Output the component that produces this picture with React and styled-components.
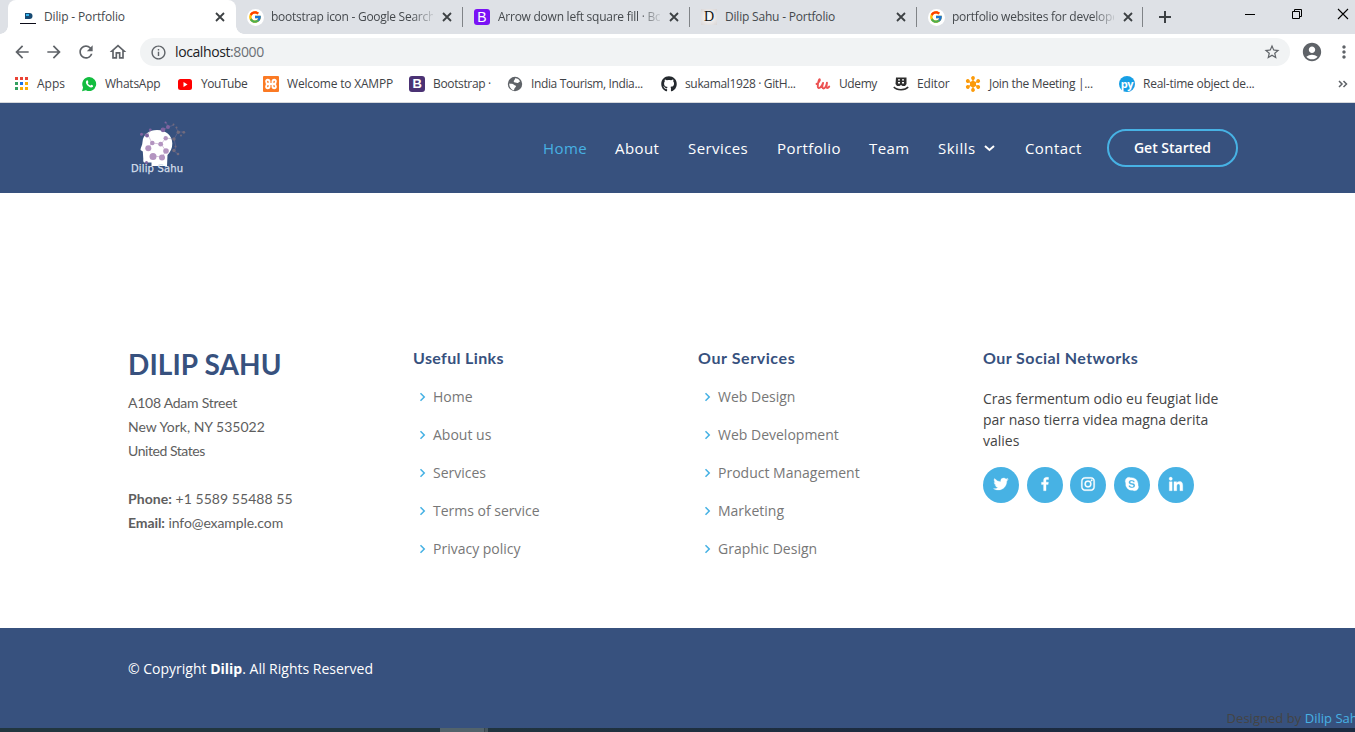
import React from 'react';
import styled, { createGlobalStyle } from 'styled-components';
import { FcGoogle } from 'react-icons/fc';
import { MdArrowBack, MdArrowForward, MdRefresh, MdOutlineHome, MdInfoOutline, MdStarBorder, MdAccountCircle, MdMoreVert } from 'react-icons/md';
import { BiLogoTwitter, BiLogoFacebook, BiLogoInstagram, BiLogoSkype, BiLogoLinkedin, BiChevronRight } from 'react-icons/bi';
import { FaGithub } from 'react-icons/fa';

const Global = createGlobalStyle`
  * { box-sizing: border-box; }
  html, body { margin: 0; overflow: hidden; background: #fff; }
  body { font-family: "Open Sans", "Noto Sans", sans-serif; color: #444; }
  svg { display: block; flex: none; }
`;

const Screen = styled.div`
  width: 1355px;
  height: 732px;
  overflow: hidden;
  display: flex;
  flex-direction: column;
`;

/* Browser chrome */
const TabStrip = styled.div`
  height: 34px;
  flex: none;
  display: flex;
  align-items: stretch;
  padding-left: 8px;
  background: #dee1e6;
`;
const Tab = styled.div`
  width: ${p => (p.$active ? 228 : p.$w || 227)}px;
  flex: none;
  display: flex;
  align-items: center;
  padding: 0 10px 0 ${p => (p.$active ? 12 : 11)}px;
  background: ${p => (p.$active ? '#fff' : 'transparent')};
  border-radius: 8px 8px 0 0;
  position: relative;
  ${p => p.$active && `
    &::before, &::after {
      content: ''; position: absolute; bottom: 0; width: 8px; height: 8px;
    }
    &::before { left: -8px; background: radial-gradient(circle at 0 0, transparent 7.5px, #fff 8px); }
    &::after { right: -8px; background: radial-gradient(circle at 100% 0, transparent 7.5px, #fff 8px); }
  `}
`;
const Favicon = styled.div`
  width: 16px;
  height: 16px;
  flex: none;
  display: flex;
  align-items: center;
  justify-content: center;
`;
const TabTitle = styled.div`
  width: ${p => (p.$active ? 166 : 162)}px;
  margin-left: 8px;
  flex: none;
  overflow: hidden;
  white-space: nowrap;
  font-size: 12px;
  line-height: 18px;
  letter-spacing: ${p => p.$ls || 0}px;
  color: #45494d;
  ${p => p.$fade && 'mask-image: linear-gradient(90deg, #000 140px, transparent 166px);'}
`;
const TabClose = styled.svg`
  width: 14px;
  height: 14px;
  margin-left: ${p => (p.$active ? 3 : 7)}px;
  stroke: #3c4043;
  stroke-width: 1.8;
`;
const TabRule = styled.div`
  width: 1px;
  height: 20px;
  position: absolute;
  right: 0;
  top: 7px;
  background: #808387;
`;
const NewTab = styled.div`
  width: 43px;
  display: flex;
  align-items: center;
  justify-content: center;
`;
const WindowButtons = styled.div`
  margin-left: auto;
  height: 28px;
  display: flex;
  align-items: center;
  gap: 34px;
  padding-right: 6px;
`;

const Toolbar = styled.div`
  height: 36px;
  flex: none;
  display: flex;
  align-items: center;
  color: #5f6368;
  padding: 0 0 0 12px;
`;
const ToolIcons = styled.div`
  width: 128px;
  display: flex;
  gap: 12px;
`;
const Omnibox = styled.div`
  width: 1150px;
  height: 28px;
  display: flex;
  align-items: center;
  padding: 0 10px;
  border-radius: 14px;
  background: #f1f3f4;
`;
const Address = styled.div`
  flex: 1;
  margin-left: 8px;
  font-size: 14px;
  line-height: 20px;
  letter-spacing: -0.4px;
  color: #202124;
  span { color: #6b6f74; }
`;
const ProfileIcon = styled.div`
  margin-left: 11px;
  margin-right: 11px;
`;

const Bookmarks = styled.div`
  height: 33px;
  flex: none;
  display: flex;
  padding: 0 4px 5px 13px;
  border-bottom: 1px solid #d5d8dc;
`;
const Bookmark = styled.div`
  width: ${p => p.$w}px;
  flex: none;
  display: flex;
  align-items: center;
  gap: 8px;
  white-space: nowrap;
  font-size: 12px;
  letter-spacing: ${p => p.$ls}px;
  color: #3f4347;
`;
const Overflow = styled.div`
  margin-left: auto;
  display: flex;
  align-items: center;
`;
const Badge = styled.div`
  width: 16px;
  height: 16px;
  display: flex;
  align-items: center;
  justify-content: center;
  border-radius: ${p => p.$r ?? 3}px;
  background: ${p => p.$bg};
  color: ${p => p.$fg || '#fff'};
  font: ${p => p.$font || 'bold 13px/16px "Liberation Sans", sans-serif'};
`;
const White = styled.div`
  width: 17px;
  height: 17px;
  flex: none;
  display: flex;
  align-items: center;
  justify-content: center;
  border-radius: 50%;
  background: #fff;
`;

/* Site header */
const Header = styled.header`
  height: 90px;
  flex: none;
  display: flex;
  padding: 0 117px 0 128px;
  background: #37517e;
`;
const Nav = styled.nav`
  margin-left: auto;
  display: flex;
  align-items: center;
`;
const NavLink = styled.a`
  width: ${p => p.$w}px;
  flex: none;
  display: flex;
  align-items: center;
  gap: 8px;
  white-space: nowrap;
  font-size: 15px;
  font-weight: 500;
  line-height: 20px;
  letter-spacing: ${p => p.$ls || 0.42}px;
  color: ${p => (p.$active ? '#47b2e4' : '#fff')};
`;
const StartButton = styled.a`
  width: 131px;
  height: 38px;
  margin-bottom: 1px;
  display: flex;
  align-items: center;
  justify-content: center;
  border: 2px solid #47b2e4;
  border-radius: 50px;
  font-size: 14px;
  font-weight: 600;
  color: #fff;
`;

/* Footer */
const FooterTop = styled.section`
  height: 435px;
  flex: none;
  display: grid;
  grid-template-columns: repeat(4, 285px);
  padding: 154px 0 0 128px;
`;
const Brand = styled.h3`
  margin: 0 0 10px;
  font: 700 28px/34px Lato, sans-serif;
  letter-spacing: 0.1px;
  color: #37517e;
`;
const Contact = styled.p`
  margin: 0;
  font: 400 14px/24px Lato, sans-serif;
  color: #5e5e5e;
  white-space: nowrap;
`;
const Line = styled.span`
  display: block;
  min-height: 24px;
  letter-spacing: ${p => p.$ls || 0}px;
`;
const ColumnTitle = styled.h4`
  margin: 0;
  padding-top: 1px;
  font: 700 16px/20px Lato, sans-serif;
  letter-spacing: ${p => p.$ls || 0}px;
  color: #37517e;
`;
const Links = styled.ul`
  margin: 18px 0 0;
  padding: 0;
  list-style: none;
  li {
    height: 38px;
    display: flex;
    align-items: flex-start;
    font-size: 14px;
    line-height: 21px;
    color: #777;
  }
  svg { width: 18px; height: 18px; margin: 2px 2px 0 0; color: #47b2e4; }
`;
const Blurb = styled.p`
  width: 250px;
  margin: 20px 0 16px;
  font-size: 14px;
  line-height: 21px;
  color: #444;
`;
const Socials = styled.div`
  display: flex;
  gap: 7.7px;
`;
const Social = styled.a`
  width: 36px;
  height: 36px;
  display: flex;
  align-items: center;
  justify-content: center;
  padding-bottom: 2px;
  border-radius: 50%;
  background: #47b2e4;
  color: #fff;
  svg { width: 18px; height: 18px; stroke: #fff; stroke-width: 0.4; }
`;
const FooterBottom = styled.footer`
  height: 100px;
  flex: none;
  display: flex;
  flex-direction: column;
  justify-content: space-between;
  overflow: hidden;
  padding: 30px 0 0 128px;
  background: #37517e;
`;
const Copyright = styled.div`
  font-size: 14px;
  line-height: 21px;
  color: #fff;
`;
const Credits = styled.div`
  margin-left: 1098.600px;
  font-size: 13px;
  line-height: 20px;
  letter-spacing: 0.03px;
  white-space: nowrap;
  color: #444;
  a { color: #47b2e4; }
`;
const Taskbar = styled.div`
  height: 4px;
  flex: none;
  background: linear-gradient(90deg, #21363f 0, #21363f 440px, #52636b 440px, #52636b 484px, #26343c 484px, #46565e 485px, #46565e 488px, #20343f 488px, #1c2b40 900px, #1b2a40 100%);
`;
const Logo = styled.svg`
  margin-top: 15px;
`;

const SiteLogo = () => (
  <Logo width="64" height="60" viewBox="128 118 64 60">
    <path fill="#fff" d="M142.500 142c.5-7.500 6.500-12 14.500-12 9 0 15.300 5.500 15.300 13.500 0 5-1.800 8-4.800 11.500l-.5 11h-15.500v-3.500h-7c-1.200 0-1.400-1.500-1.200-3.500l-.5-7.500-2.300-1.500c0-2.500 2-5 2-8z" />
    <g stroke="#b79bc4" strokeWidth=".7" fill="none" opacity=".8">
      <path d="M152 143l9 1 5-6 M161 144l5 7-4 6-9-1M148 148l4-5-4-8" />
    </g>
    <path stroke="#84739a" strokeWidth=".6" fill="none" opacity=".7" d="M142 134l6 0 3-4M163 130l5-3 6-2M166 138l8 1 4-7h6M174 139l2 8-2 4 4 3M178 132l-2-5M166 122l2 5" />
    <g fill="#b394c0">
      <circle cx="148.300" cy="148.300" r="3" /><circle cx="153" cy="156.500" r="3.500" /><circle cx="162" cy="157.500" r="3" />
      <circle cx="152.300" cy="143" r="2.300" /><circle cx="160.700" cy="144.200" r="2.400" /><circle cx="166" cy="151" r="2.800" /><circle cx="165.700" cy="138.200" r="2.200" />
    </g>
    <g fill="#7f63a0">
      <circle cx="147" cy="135.500" r="2" /><circle cx="141.500" cy="134.300" r="1.500" /><circle cx="150.300" cy="129.800" r="1.400" /><circle cx="146.500" cy="162.500" r="1.500" />
      <circle cx="163" cy="129.800" r="2.400" /><circle cx="168" cy="127" r="2" /><circle cx="165.500" cy="122.500" r="1" />
    </g>
    <g fill="#716b7d">
      <circle cx="174" cy="139" r="1.700" /><circle cx="178.300" cy="132.300" r="1.700" /><circle cx="183.800" cy="132.300" r="1.400" /><circle cx="173.500" cy="124.500" r="1" /><circle cx="176.500" cy="127.500" r="1" />
      <circle cx="174" cy="150.500" r="1.700" /><circle cx="178" cy="154" r="1.300" /><circle cx="175.500" cy="146.500" r="1" /><circle cx="181" cy="135.500" r="1" />
    </g>
    <text x="131" y="171.500" textLength="52" fill="#d5dfec" fontFamily="DejaVu Sans, sans-serif" fontSize="10" stroke="#d5dfec" strokeWidth=".25">Dilip Sahu</text>
  </Logo>
);
const DilipFav = () => (
  <svg width="16" height="16"><path fill="#174a73" d="M5 4h4.500a3 3 0 0 1 0 6H5z" /><path fill="#35b5ee" d="M6 5h3v2H6z" /><path fill="#0b0b18" d="M0 14h16v1H0z" /></svg>
);
const Apps = () => {
  const c = ['#ea4335', '#ea4335', '#ea4335', '#34a060', '#1a73e8', '#fbad05', '#34a060', '#fbad05', '#fbad05'];
  return <svg width="16" height="16">{c.map((f, i) => <rect key={i} x={2 + (i % 3) * 5} y={1 + Math.floor(i / 3) * 5} width="3" height="3" fill={f} />)}</svg>;
};
const Whats = () => (
  <svg width="16" height="16" viewBox="0 0 16 16"><path fill="#12bd3f" d="M8.200 1a7 7 0 1 1-3.300 13.200L1 15.200l1.100-3.800A7 7 0 0 1 8.200 1z" /><path fill="#fff" d="M5.700 4.500c.5-.4.900-.2 1.100.2l.6 1.300c.1.400-.6.900-.6 1.200.5 1.100 1.400 1.900 2.500 2.400.4 0 .8-.9 1.200-.8l1.400.8c.4.300.1 1.100-.3 1.500-1.700 1.400-5.200-.8-6.200-3-.8-1.500-.6-2.900.3-3.600z" /></svg>
);
const YouTube = () => (
  <svg width="16" height="16"><rect x="1" y="3" width="14" height="11" rx="2.500" fill="red" /><path d="M6.500 6v5l4-2.500z" fill="#fff" /></svg>
);
const Xampp = () => (
  <svg width="16" height="16"><rect width="16" height="16" rx="1" fill="#fb7a24" /><path fill="none" stroke="#fff" strokeWidth="1.900" strokeLinecap="round" strokeLinejoin="round" d="M8 8H4.800C2.500 7 2.700 3.800 4.700 3.800c1.300 0 1.800.6 1.800 1.700M8 8h3.200c2.300-1 2.100-4.200.1-4.200-1.300 0-1.800.6-1.800 1.700M4.800 8c-2.300 1-2.100 4.200-.1 4.200 1.300 0 1.800-.6 1.800-1.700v-5M11.200 8c2.300 1 2.100 4.200.1 4.200-1.300 0-1.800-.6-1.800-1.700v-5" /></svg>
);
const Globe = () => (
  <svg width="16" height="16"><circle cx="8" cy="8" r="7.200" fill="#5f6368" /><path fill="#fff" d="M2.300 7.500c2 .2 4 .4 4.700 1.200.6.800 2.200.6 2 1.800-.3 1-1.600 1-2 3.700-3-.5-5-3.500-4.700-6.700zM8 2.200c2.500 0 4.200 1.200 5.200 3.300-1.600.2-1.400 1.700-2.700 1.500-1.300-.3-3.600-.2-3.800-1.500-.1-1.200 1.600-1.500 1.300-3.300z" /></svg>
);
const Udemy = () => (
  <svg width="16" height="16"><path fill="none" stroke="#ec5252" strokeWidth="1.900" strokeLinecap="round" strokeLinejoin="round" d="M1.500 8c2-.8 3.800-3.600 3.300-4.600-.8-.8-2.300 4.500-2 7.200.3 2.800 3.400 1.600 5.300-3.700-1.300 4-.7 5.600.3 5.600 1.500 0 2.900-2.700 3.600-5.700-.8 4-.5 5.200.3 5.200.8 0 1.400-.7 1.900-1.400" /></svg>
);
const Editor = () => (
  <svg width="16" height="16"><path fill="#2e2e2e" d="M3 1.500h10.500V8L12 10H9.500L8 9l-1.500 1H4L2.500 8z" /><path fill="#fff" d="M5 3.200h2v1.300H5zM9 3.200h2v1.300H9zM5 6h2v1.600H5zM9 6h2v1.600H9z" /><path d="M.8 11c3 3.500 11.400 3.500 14.400 0" fill="none" stroke="#2e2e2e" strokeWidth="1.500" /></svg>
);
const Meeting = () => (
  <svg width="16" height="16" fill="#fb9b0c" stroke="#fb9b0c" strokeWidth="1.400">
    <circle cx="8" cy="8" r="2.400" />
    {[0, 60, 120, 180, 240, 300].map(a => <g key={a} transform={`rotate(${a} 8 8)`}><path d="M8 8V3" /><circle cx="8" cy="2" r="1.200" /></g>)}
  </svg>
);

const Star = styled(MdStarBorder)`width: 18px; height: 18px; margin-right: -1px;`;

const tabs = [
  { title: 'Dilip - Portfolio', icon: <DilipFav />, active: true, ls: -0.15 },
  { title: 'bootstrap icon - Google Search', icon: <White><FcGoogle size={14} /></White>, fade: true, ls: -0.27 },
  { title: 'Arrow down left square fill · Bootstrap', icon: <Badge $bg="#7a12f5" $font='400 14px/16px "Liberation Sans", sans-serif'>B</Badge>, fade: true, ls: -0.25 },
  { title: 'Dilip Sahu - Portfolio', icon: <Badge $bg="radial-gradient(#fff, #d9d5d5)" $fg="#111" $r={0} $font='400 14px/16px "Liberation Serif", serif'>D</Badge>, ls: -0.2 },
  { title: 'portfolio websites for developers', icon: <White><FcGoogle size={14} /></White>, fade: true, w: 226, ls: -0.23 },
];
const bookmarks = [
  ['Apps', 68, <Apps />, 0],
  ['WhatsApp', 96, <Whats />, -0.25],
  ['YouTube', 86, <YouTube />, -0.45],
  ['Welcome to XAMPP', 146, <Xampp />, -0.2],
  ['Bootstrap ·', 98, <Badge $bg="#4b3274">B</Badge>, -0.35],
  ['India Tourism, India...', 154, <Globe />, -0.37],
  ['sukamal1928 · GitH...', 154, <FaGithub size={16} color="#24292e" />, -0.35],
  ['Udemy', 78, <Udemy />, -0.4],
  ['Editor', 72, <Editor />, -0.15],
  ['Join the Meeting |...', 154, <Meeting />, -0.3],
  ['Real-time object de...', 150, <Badge $bg="#179fe5" $r={8} $font='bold 11px/14px "Open Sans", sans-serif'>py</Badge>, -0.25],
];
const socials = [BiLogoTwitter, BiLogoFacebook, BiLogoInstagram, BiLogoSkype, BiLogoLinkedin];

const LinkColumn = ({ title, items, ls }) => (
  <div>
    <ColumnTitle $ls={ls}>{title}</ColumnTitle>
    <Links>{items.map(t => <li key={t}><BiChevronRight />{t}</li>)}</Links>
  </div>
);

export default function App() {
  return (
    <Screen>
      <Global />
      <TabStrip>
        {tabs.map(t => (
          <Tab key={t.title} $active={t.active} $w={t.w}>
            <Favicon>{t.icon}</Favicon>
            <TabTitle $active={t.active} $fade={t.fade} $ls={t.ls}>{t.title}</TabTitle>
            <TabClose $active={t.active} viewBox="0 0 14 14"><path d="M3 3l8 8M11 3l-8 8" /></TabClose>
            {!t.active && <TabRule />}
          </Tab>
        ))}
        <NewTab><svg width="12" height="12"><path d="M6 0v12M0 6h12" stroke="#3c4043" strokeWidth="2" /></svg></NewTab>
        <WindowButtons>
          <svg width="12" height="12"><path d="M0 6.500h10" stroke="#000" /></svg>
          <svg width="12" height="12" fill="none" stroke="#000"><path d="M1.500 3.500h7v7h-7zM3.500 3.500v-2h7v7h-2" /></svg>
          <svg width="12" height="12"><path d="M1 1l10 10M11 1L1 11" stroke="#000" strokeWidth="1.100" /></svg>
        </WindowButtons>
      </TabStrip>
      <Toolbar>
        <ToolIcons>
          <MdArrowBack size={20} /><MdArrowForward size={20} /><MdRefresh size={20} /><MdOutlineHome size={20} />
        </ToolIcons>
        <Omnibox>
          <MdInfoOutline size={17} />
          <Address>localhost<span>:8000</span></Address>
          <Star />
        </Omnibox>
        <ProfileIcon><MdAccountCircle size={22} /></ProfileIcon>
        <MdMoreVert size={20} />
      </Toolbar>
      <Bookmarks>
        {bookmarks.map(([label, w, icon, ls]) => (
          <Bookmark key={label} $w={w} $ls={ls}><Favicon>{icon}</Favicon>{label}</Bookmark>
        ))}
        <Overflow><svg width="14" height="10" fill="none" stroke="#5f6368" strokeWidth="1.500"><path d="M2 2l3 3-3 3M6.500 2l3 3-3 3" /></svg></Overflow>
      </Bookmarks>
      <Header>
        <SiteLogo />
        <Nav>
          <NavLink $w={72} $active>Home</NavLink>
          <NavLink $w={73}>About</NavLink>
          <NavLink $w={89}>Services</NavLink>
          <NavLink $w={92}>Portfolio</NavLink>
          <NavLink $w={69}>Team</NavLink>
          <NavLink $w={87} $ls={0.5}>Skills<svg width="11" height="8" fill="none" stroke="#fff" strokeWidth="2"><path d="M1 2l4.500 4L10 2" /></svg></NavLink>
          <NavLink $w={82}>Contact</NavLink>
          <StartButton>Get Started</StartButton>
        </Nav>
      </Header>
      <FooterTop>
        <div>
          <Brand>DILIP SAHU</Brand>
          <Contact>
            <Line $ls={-0.25}>A108 Adam Street</Line>
            <Line>New York, NY 535022</Line>
            <Line $ls={-0.45}>United States</Line>
            <Line />
            <Line $ls={0.05}><strong>Phone:</strong> +1 5589 55488 55</Line>
            <Line $ls={-0.08}><strong>Email:</strong> info@example.com</Line>
          </Contact>
        </div>
        <LinkColumn title="Useful Links" ls={0.35} items={['Home', 'About us', 'Services', 'Terms of service', 'Privacy policy']} />
        <LinkColumn title="Our Services" ls={0.58} items={['Web Design', 'Web Development', 'Product Management', 'Marketing', 'Graphic Design']} />
        <div>
          <ColumnTitle $ls={0.43}>Our Social Networks</ColumnTitle>
          <Blurb>Cras fermentum odio eu feugiat lide par naso tierra videa magna derita valies</Blurb>
          <Socials>{socials.map((Icon, i) => <Social key={i}><Icon /></Social>)}</Socials>
        </div>
      </FooterTop>
      <FooterBottom>
        <Copyright>© Copyright <strong>Dilip</strong>. All Rights Reserved</Copyright>
        <Credits>Designed by <a>Dilip Sahu</a></Credits>
      </FooterBottom>
      <Taskbar />
    </Screen>
  );
}
